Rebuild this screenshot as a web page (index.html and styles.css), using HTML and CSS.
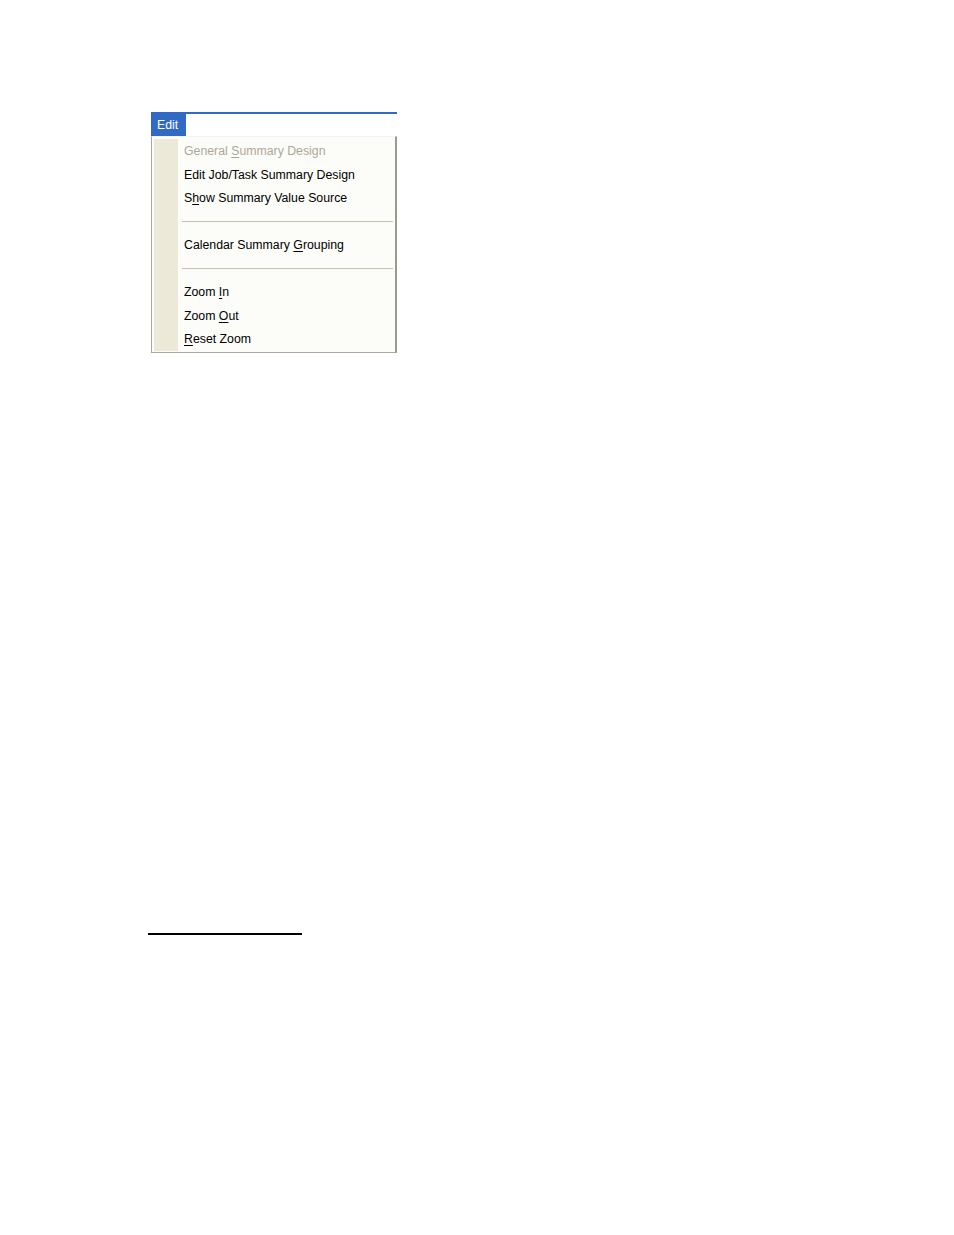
FILE: index.html
```html
<!DOCTYPE html>
<html>
<head>
<meta charset="utf-8">
<link rel="stylesheet" href="styles.css">
</head>
<body>
<div class="page">
  <div class="menubar"><span class="tab">Edit</span></div>
  <div class="menu">
    <div class="gutter"></div>
    <ul class="items">
      <li class="item disabled">General <u>S</u>ummary Design</li>
      <li class="item">Edit Job/Task Summary Design</li>
      <li class="item">S<u>h</u>ow Summary Value Source</li>
      <li class="sep"><span></span></li>
      <li class="item">Calendar Summary <u>G</u>rouping</li>
      <li class="sep"><span></span></li>
      <li class="item">Zoom <u>I</u>n</li>
      <li class="item">Zoom <u>O</u>ut</li>
      <li class="item"><u>R</u>eset Zoom</li>
    </ul>
  </div>
  <div class="rule"></div>
</div>
</body>
</html>
```

FILE: styles.css
```css
html, body {
  margin: 0;
  padding: 0;
  background: #ffffff;
}

.page {
  padding: 112px 0 0 148px;
  font-family: "Liberation Sans", Arial, sans-serif;
  font-size: 12.3px;
  color: #000000;
}

.menubar {
  margin-left: 3px;
  width: 246px;
  height: 24px;
  box-sizing: border-box;
  border-top: 2px solid #316ac5;
  display: flex;
}

.tab {
  display: flex;
  align-items: center;
  width: 35px;
  height: 22px;
  box-sizing: border-box;
  padding: 0 0 0 6px;
  background: #316ac5;
  color: #ffffff;
}

.menu {
  margin-left: 3px;
  width: 246px;
  height: 217px;
  box-sizing: border-box;
  background: #fcfcf9;
  border: 1px solid #aca899;
  border-top-color: #f4f3ee;
  border-right: 2px solid #9d9a8c;
  padding: 2px 1px 1px 2px;
  display: flex;
}

.gutter {
  width: 24px;
  flex: 0 0 24px;
  background: #ece9d8;
}

.items {
  list-style: none;
  margin: 0;
  padding: 0;
  flex: 1;
}

.item {
  height: 23.5px;
  box-sizing: border-box;
  padding: 2px 0 0 6px;
  line-height: 21.5px;
  white-space: nowrap;
}

.item u {
  text-decoration: underline;
  text-underline-offset: 2px;
}

.disabled {
  color: #aca899;
}

.sep {
  height: 23.5px;
  display: flex;
  align-items: center;
  padding: 0 1px 0 4px;
}

.sep span {
  display: block;
  flex: 1;
  height: 1px;
  background: #c5c2b2;
}

.rule {
  margin-top: 580px;
  width: 154px;
  height: 2px;
  background: #000000;
}
```
